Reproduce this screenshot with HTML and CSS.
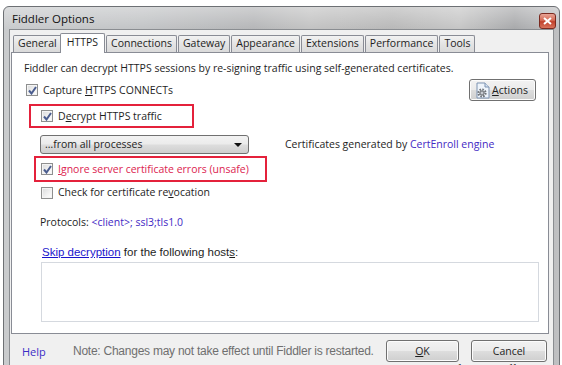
FILE: index.html
```html
<!DOCTYPE html>
<html lang="en">
<head>
  <meta charset="UTF-8">
  <title>Fiddler Options</title>
  <link rel="stylesheet" href="styles.css">
</head>
<body>
  <div class="window">
    <div class="titlebar">
      <span class="title">Fiddler Options</span>
      <span class="close">
        <svg width="9" height="8" viewBox="0 0 9 8"><path d="M1 1 L8 7 M8 1 L1 7" stroke="#fff" stroke-width="2"/></svg>
      </span>
    </div>

    <div class="client">
      <div class="tabs">
        <div class="tab">General</div>
        <div class="tab active">HTTPS</div>
        <div class="tab">Connections</div>
        <div class="tab">Gateway</div>
        <div class="tab">Appearance</div>
        <div class="tab">Extensions</div>
        <div class="tab">Performance</div>
        <div class="tab">Tools</div>
      </div>

      <div class="panel">
        <p class="intro">Fiddler can decrypt HTTPS sessions by re-signing traffic using self-generated certificates.</p>

        <div class="row capture-row">
          <label class="check">
            <span class="box checked"><svg width="9" height="9" viewBox="0 0 9 9"><path d="M1 4.5 L3.5 7.5 L8 1" fill="none" stroke="#4a5d8f" stroke-width="2"/></svg></span>
            <span>Capture <u>H</u>TTPS CONNECTs</span>
          </label>
          <button class="btn actions">
            <svg width="17" height="17" viewBox="0 0 17 17">
              <path d="M2 1 H10 L14 5 V16 H2 Z" fill="#eef4fb" stroke="#7d93b2"/>
              <path d="M10 1 V5 H14" fill="#d5e2f0" stroke="#7d93b2"/>
              <circle cx="7" cy="11" r="3.6" fill="none" stroke="#6f7378" stroke-width="2" stroke-dasharray="1.6 1.2"/>
              <circle cx="7" cy="11" r="2.2" fill="#a9adb3" stroke="#6f7378"/>
              <circle cx="7" cy="11" r="0.8" fill="#eef4fb"/>
            </svg>
            <span><u>A</u>ctions</span>
          </button>
        </div>

        <div class="highlight hl-decrypt">
          <label class="check">
            <span class="box checked"><svg width="9" height="9" viewBox="0 0 9 9"><path d="M1 4.5 L3.5 7.5 L8 1" fill="none" stroke="#4a5d8f" stroke-width="2"/></svg></span>
            <span>D<u>e</u>crypt HTTPS traffic</span>
          </label>
        </div>

        <div class="row select-row">
          <div class="select">
            <span>…from all processes</span>
            <span class="arrow"></span>
          </div>
          <span class="certs">Certificates generated by <span class="link">CertEnroll engine</span></span>
        </div>

        <div class="highlight hl-ignore">
          <label class="check unsafe">
            <span class="box checked"><svg width="9" height="9" viewBox="0 0 9 9"><path d="M1 4.5 L3.5 7.5 L8 1" fill="none" stroke="#4a5d8f" stroke-width="2"/></svg></span>
            <span><u>I</u>gnore server certificate errors (unsafe)</span>
          </label>
        </div>

        <label class="check revoke">
          <span class="box"></span>
          <span>Check for certificate re<u>v</u>ocation</span>
        </label>

        <p class="protocols">Protocols: <span class="link">&lt;client&gt;; ssl3;tls1.0</span></p>

        <p class="skip"><span class="skip-link">Skip decryption</span> for the following host<u>s</u>:</p>

        <div class="hosts"></div>
      </div>

      <div class="footer">
        <span class="help">Help</span>
        <span class="note">Note: Changes may not take effect until Fiddler is restarted.</span>
        <button class="btn ok"><u>O</u>K</button>
        <button class="btn cancel">Cancel</button>
      </div>
    </div>
  </div>
  <span class="stray">drops woollen area</span>
</body>
</html>
```

FILE: styles.css
```css
* {
  margin: 0;
  padding: 0;
  box-sizing: border-box;
}

body {
  width: 562px;
  height: 365px;
  overflow: hidden;
  background: #fff;
  font-family: 'Open Sans', 'Noto Sans', sans-serif;
  font-size: 10.5px;
  color: #1e1e1e;
  position: relative;
}

u {
  text-decoration: underline;
  text-underline-offset: 1px;
}

.window {
  margin: 6px 0 0 3px;
  width: 557px;
  height: 400px;
  border: 1px solid #6d7074;
  border-radius: 6px 6px 0 0;
  padding: 0 5px;
  background:
    linear-gradient(to bottom, rgba(255, 255, 255, 0.35), rgba(255, 255, 255, 0) 22px),
    linear-gradient(to right, #c9cbcd 0%, #c2c4c6 25%, #b5b6b8 45%, #c3c3c3 55%, #b8b8b8 70%, #c6c6c6 82%, #a8a9ab 92%, #c0c1c3 100%);
  display: flex;
  flex-direction: column;
}

.titlebar {
  height: 22px;
  display: flex;
  align-items: center;
  justify-content: space-between;
  padding-left: 3px;
}

.title {
  font-size: 11.5px;
  color: #111;
  padding-top: 1px;
}

.close {
  width: 17px;
  height: 16px;
  margin-top: 6px;
  margin-right: -2px;
  border: 1px solid #7a2a20;
  border-radius: 3px;
  background: linear-gradient(to bottom, #e8a496 0%, #d56a55 45%, #c0412c 55%, #d9735c 100%);
  display: flex;
  align-items: center;
  justify-content: center;
}

.client {
  flex: 1;
  background: #f0f0f0;
  border: 1px solid #8a8d91;
  border-bottom: none;
  padding-top: 3px;
}

.tabs {
  display: flex;
  align-items: flex-end;
  height: 19px;
  padding-left: 3px;
  position: relative;
  z-index: 1;
}

.tab {
  height: 17px;
  padding: 0 4px;
  margin-right: 1px;
  border: 1px solid #898c95;
  border-bottom: none;
  border-radius: 2px 2px 0 0;
  background: linear-gradient(to bottom, #f2f2f2, #e4e4e4 50%, #dadada);
  line-height: 15px;
  color: #1e1e1e;
}

.tab.active {
  height: 20px;
  margin: 0 -1px 0 -3px;
  padding: 0 6px;
  background: #fff;
  line-height: 16px;
  position: relative;
  top: 1px;
}

.tab.active + .tab {
  margin-left: 2px;
}

.panel {
  margin: 0 4px 0 1px;
  background: #fff;
  border: 1px solid #898c95;
  height: 282px;
  padding: 8px 12px 0 12px;
  display: flex;
  flex-direction: column;
  align-items: flex-start;
}

.intro {
  line-height: 15px;
}

.row {
  display: flex;
  align-items: center;
}

.capture-row {
  margin-top: 3px;
  width: 100%;
  justify-content: space-between;
  height: 22px;
  padding-left: 2px;
}

.check {
  display: flex;
  align-items: center;
  gap: 5px;
  line-height: 15px;
}

.box {
  width: 12px;
  height: 12px;
  border: 1px solid #8e8f8f;
  background: linear-gradient(135deg, #d9dadb, #f6f6f6 70%, #fff);
  box-shadow: inset 0 0 0 1px #f4f4f4;
  display: flex;
  align-items: center;
  justify-content: center;
  flex-shrink: 0;
}

.btn {
  font-family: 'Open Sans', 'Noto Sans', sans-serif;
  font-size: 10.5px;
  color: #1e1e1e;
  height: 22px;
  border: 1px solid #707070;
  border-radius: 3px;
  background: linear-gradient(to bottom, #f2f2f2 0%, #ebebeb 48%, #dddddd 52%, #cfcfcf 100%);
  box-shadow: inset 0 0 0 1px #fcfcfc;
}

.actions {
  width: 67px;
  display: flex;
  align-items: center;
  justify-content: center;
  padding-right: 2px;
}

.highlight {
  border: 2px solid #e4213b;
  display: flex;
  align-items: center;
}

.hl-decrypt {
  margin: 3px 0 0 5px;
  width: 165px;
  height: 24px;
  padding-left: 10px;
}

.select-row {
  margin: 7px 0 0 16px;
}

.select {
  width: 209px;
  height: 19px;
  border: 1px solid #707070;
  border-radius: 3px;
  background: linear-gradient(to bottom, #f2f2f2 0%, #ebebeb 48%, #dddddd 52%, #cfcfcf 100%);
  display: flex;
  align-items: center;
  justify-content: space-between;
  padding: 0 6px 0 4px;
  line-height: 15px;
}

.arrow {
  width: 0;
  height: 0;
  border-left: 4px solid transparent;
  border-right: 4px solid transparent;
  border-top: 4px solid #111;
}

.certs {
  margin-left: 36px;
  line-height: 15px;
}

.link {
  color: #4329c4;
}

.hl-ignore {
  margin: 2px 0 0 10px;
  width: 233px;
  height: 26px;
  padding-left: 5px;
}

.unsafe {
  color: #dc2450;
}

.revoke {
  margin: 4px 0 0 17px;
  height: 13px;
}

.protocols {
  margin: 16px 0 0 16px;
  line-height: 15px;
}

.skip {
  margin: 15px 0 0 18px;
  line-height: 15px;
  font-family: 'Liberation Sans', sans-serif;
  font-size: 11.5px;
}

.skip-link {
  color: #1a14cc;
  text-decoration: underline;
}

.hosts {
  margin: 2px 0 0 17px;
  width: 498px;
  height: 60px;
  border: 1px solid #d5d9df;
  background: #fff;
}

.footer {
  display: flex;
  align-items: center;
  height: 30px;
  margin-top: 2px;
  padding-left: 12px;
}

.help {
  color: #3b2cc6;
  font-size: 11px;
  width: 51px;
}

.note {
  color: #6f6f6f;
  font-family: 'Liberation Sans', sans-serif;
  font-size: 12px;
  letter-spacing: -0.25px;
  width: 313px;
}

.ok {
  width: 73px;
}

.cancel {
  width: 76px;
  margin-left: 12px;
}

.stray {
  position: absolute;
  left: 455px;
  top: 362px;
  font-family: 'Liberation Serif', serif;
  font-size: 13px;
  color: #333;
  line-height: 14px;
}
```
